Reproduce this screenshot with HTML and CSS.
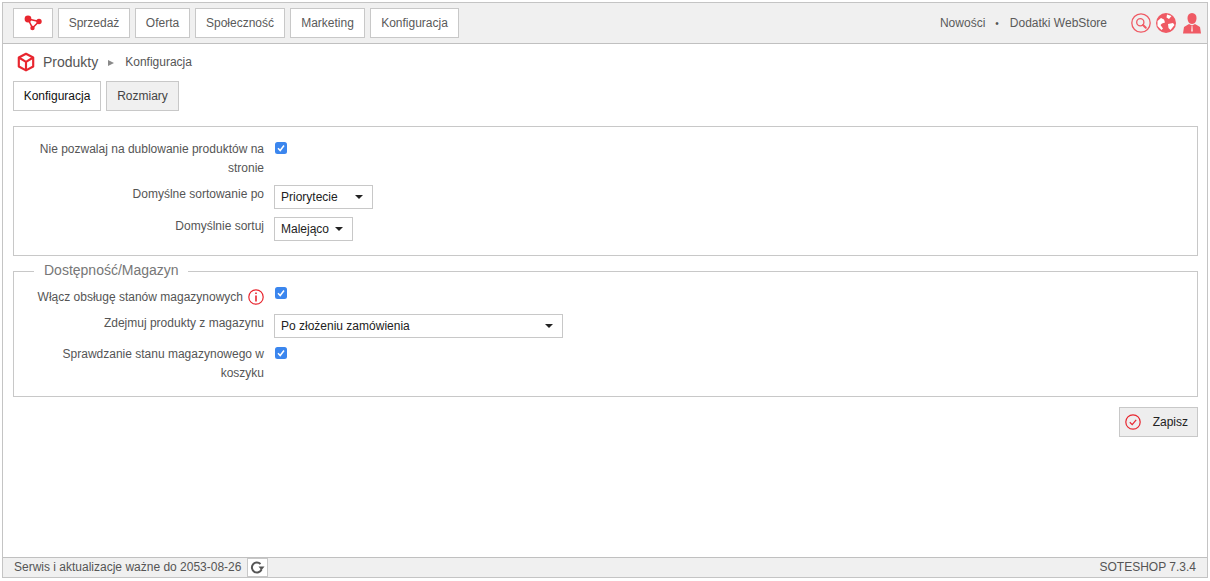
FILE: index.html
```html
<!DOCTYPE html>
<html lang="pl">
<head>
<meta charset="utf-8">
<title>Produkty - Konfiguracja</title>
<link rel="stylesheet" href="styles.css">
</head>
<body>
<div class="app">
  <header class="topbar">
    <nav class="menu">
      <a class="btn logo-btn"><svg width="18" height="16" viewBox="0 0 18 16"><g fill="#e8262f" stroke="#e8262f"><path d="M4 4 L15 6.5 L8.500 13 Z" fill="none" stroke-width="1.600"/><circle cx="4" cy="4" r="3.400" stroke="none"/><circle cx="15" cy="6.500" r="2.700" stroke="none"/><circle cx="8.500" cy="13" r="2.200" stroke="none"/></g></svg></a>
      <a class="btn w-sales">Sprzedaż</a>
      <a class="btn w-offer">Oferta</a>
      <a class="btn w-social">Społeczność</a>
      <a class="btn w-market">Marketing</a>
      <a class="btn w-config">Konfiguracja</a>
    </nav>
    <div class="tools">
      <a class="tool-link">Nowości</a>
      <span class="dot">•</span>
      <a class="tool-link">Dodatki WebStore</a>
      <div class="tool-icons">
        <svg width="20" height="20" viewBox="0 0 20 20"><circle cx="10" cy="10" r="9.200" fill="none" stroke="#ef5a64" stroke-width="1.300"/><circle cx="9.300" cy="9.300" r="3.600" fill="none" stroke="#ef5a64" stroke-width="1.300"/><path d="M12 12 L14.800 14.800" stroke="#ef5a64" stroke-width="2" stroke-linecap="round"/></svg>
        <svg width="20" height="20" viewBox="0 0 20 20"><circle cx="10" cy="10" r="10" fill="#ef5a64"/><path d="M1.500 8 L5 5 L8 6.500 L9 9.500 L6 10.500 L4.500 12 L7 15.500 L5.500 17 L1.500 13 Z M11 1.500 L15.500 3 L13 6 L10.500 4.500 Z M12 11 L17 10 L18.500 12 L14.500 17 L12.500 15 Z" fill="#fff"/></svg>
        <svg class="user-icon" width="18" height="21" viewBox="0 0 18 21"><path d="M9 0 C12 0 13.500 2.200 13.500 5 C13.500 8 12 11 9 11 C6 11 4.500 8 4.500 5 C4.500 2.200 6 0 9 0 Z" fill="#ef5a64"/><path d="M6 11 L9 12.500 L12 11 L17 14 L18 20.500 L0 20.500 L1 14 Z" fill="#ef5a64"/><path d="M8.600 13 L9.400 13 L9.700 18 L9 19 L8.300 18 Z" fill="#fff"/></svg>
      </div>
    </div>
  </header>

  <main class="content">
    <div class="crumbs">
      <svg class="cube" width="18" height="20" viewBox="0 0 20 22"><g fill="none" stroke="#e8262f" stroke-width="2.400" stroke-linejoin="round"><path d="M10 1.800 L18 6 L18 16 L10 20.300 L2 16 L2 6 Z"/><path d="M2.500 6.300 L10 10.800 L17.500 6.300 M10 10.800 L10 20"/></g></svg>
      <span class="crumb-main">Produkty</span>
      <span class="crumb-arrow"></span>
      <span class="crumb-sub">Konfiguracja</span>
    </div>
    <div class="tabs">
      <a class="tab tab-active">Konfiguracja</a>
      <a class="tab tab-sizes">Rozmiary</a>
    </div>

    <fieldset class="panel panel-first">
      <div class="row row-check row-dup">
        <label class="lbl">Nie pozwalaj na dublowanie produktów na stronie</label>
        <span class="check"><svg width="8" height="8" viewBox="0 0 8 8"><path d="M1 4.300 L3.200 6.500 L7 1.500" fill="none" stroke="#fff" stroke-width="1.500"/></svg></span>
      </div>
      <div class="row row-select">
        <label class="lbl">Domyślne sortowanie po</label>
        <div class="select sel-a"><span>Priorytecie</span><i class="caret"></i></div>
      </div>
      <div class="row row-select">
        <label class="lbl">Domyślnie sortuj</label>
        <div class="select sel-b"><span>Malejąco</span><i class="caret"></i></div>
      </div>
    </fieldset>

    <fieldset class="panel panel-second">
      <legend>Dostępność/Magazyn</legend>
      <div class="row row-stock">
        <label class="lbl lbl-info">Włącz obsługę stanów magazynowych <svg class="info" width="16" height="16" viewBox="0 0 16 16"><circle cx="8" cy="8" r="7.200" fill="none" stroke="#e8262f" stroke-width="1.200"/><path d="M8 3.400 L8 5" stroke="#e8262f" stroke-width="1.600"/><path d="M8 6.600 L8 12.400" stroke="#e8262f" stroke-width="1.600"/></svg></label>
        <span class="check"><svg width="8" height="8" viewBox="0 0 8 8"><path d="M1 4.300 L3.200 6.500 L7 1.500" fill="none" stroke="#fff" stroke-width="1.500"/></svg></span>
      </div>
      <div class="row row-select row-off">
        <label class="lbl">Zdejmuj produkty z magazynu</label>
        <div class="select sel-c"><span>Po złożeniu zamówienia</span><i class="caret"></i></div>
      </div>
      <div class="row row-check row-cart">
        <label class="lbl">Sprawdzanie stanu magazynowego w koszyku</label>
        <span class="check"><svg width="8" height="8" viewBox="0 0 8 8"><path d="M1 4.300 L3.200 6.500 L7 1.500" fill="none" stroke="#fff" stroke-width="1.500"/></svg></span>
      </div>
    </fieldset>

    <div class="actions">
      <button class="save" type="button"><svg width="16" height="16" viewBox="0 0 16 16"><circle cx="8" cy="8" r="7.200" fill="none" stroke="#e8262f" stroke-width="1.200"/><path d="M4.800 8.300 L7.200 10.600 L11.200 5.800" fill="none" stroke="#e8262f" stroke-width="1.200"/></svg><span>Zapisz</span></button>
    </div>
  </main>

  <footer class="statusbar">
    <div class="status-left">
      <span>Serwis i aktualizacje ważne do 2053-08-26</span>
      <a class="refresh"><svg width="15" height="13" viewBox="0 0 15 13"><path d="M11.500 8.500 A5 5 0 1 1 10.500 3" fill="none" stroke="#555" stroke-width="2"/><path d="M8.500 5.600 L14.500 5.600 L11.500 9.200 Z" fill="#555"/></svg></a>
    </div>
    <span class="version">SOTESHOP 7.3.4</span>
  </footer>
</div>
</body>
</html>
```
FILE: styles.css
```css
* { box-sizing: border-box; }
html, body { margin: 0; padding: 0; background: #fff; }
body {
  padding: 2px 2px 3px 2px;
  height: 581px;
  overflow: hidden;
  font-family: "Liberation Sans", Arial, sans-serif;
  font-size: 12px;
  color: #555;
}
.app {
  height: 576px;
  border: 1px solid #c4c4c4;
  display: flex;
  flex-direction: column;
}
.topbar {
  height: 41px;
  flex: none;
  background: #f0f0f0;
  border-bottom: 1px solid #c0c0c0;
  display: flex;
  justify-content: space-between;
  align-items: flex-start;
  padding: 5px 5px 0 10px;
}
.menu { display: flex; gap: 5px; }
.btn {
  height: 30px;
  background: #fff;
  border: 1px solid #c8c8c8;
  display: flex;
  align-items: center;
  justify-content: center;
  color: #5a5a5a;
}
.logo-btn { width: 40px; }
.w-sales { width: 72px; }
.w-offer { width: 55px; }
.w-social { width: 90px; }
.w-market { width: 75px; }
.w-config { width: 89px; }
.tools { display: flex; align-items: center; height: 30px; }
.tool-link { color: #5a5a5a; }
.dot { margin: 0 11px 0 10px; font-size: 10px; color: #555; }
.tool-icons { display: flex; align-items: center; gap: 5px; margin-left: 24px; margin-right: 1px; }
.user-icon { margin-left: 2px; }
.content { flex: 1; padding: 0 9px 0 10px; }
.crumbs { display: flex; align-items: center; height: 37px; padding: 0 0 1px 4px; }
.cube { margin-right: 8px; }
.crumb-main { font-size: 14px; color: #555; }
.crumb-arrow {
  width: 0; height: 0;
  margin: 1px 11px 0 10px;
  border-left: 6px solid #8a8a8a;
  border-top: 3.500px solid transparent;
  border-bottom: 3.500px solid transparent;
}
.crumb-sub { color: #555; }
.tabs { display: flex; gap: 5px; height: 30px; }
.tab {
  display: flex;
  align-items: center;
  justify-content: center;
  height: 30px;
  border: 1px solid #c8c8c8;
  background: #f0f0f0;
  color: #444;
}
.tab-active { width: 88px; background: #fff; color: #111; }
.tab-sizes { width: 73px; }
.panel {
  margin: 0;
  padding: 0;
  border: 1px solid #c8c8c8;
  min-width: 0;
}
.panel-first { margin-top: 15px; height: 130px; padding-top: 12px; }
.panel-second { margin-top: 7px; height: 134px; padding-top: 8px; }
.panel legend {
  margin-left: 20px;
  padding: 0 9px 1px 10px;
  font-size: 14px;
  line-height: 15px;
  color: #777;
}
.row { display: flex; align-items: flex-start; margin-bottom: 8px; }
.lbl {
  width: 250px;
  flex: none;
  padding-left: 10px;
  text-align: right;
  line-height: 19px;
  color: #555;
}
.row-dup .lbl { padding-top: 1px; }
.lbl-info {
  display: flex;
  justify-content: flex-end;
  align-items: center;
  gap: 5px;
  white-space: nowrap;
  height: 20px;
  padding-left: 0;
}
.info { flex: none; }
.row-dup { margin-bottom: 7px; }
.row-stock { height: 20px; margin-bottom: 7px; }
.check {
  width: 12px;
  height: 12px;
  margin-left: 11px;
  margin-top: 3px;
  border-radius: 2.500px;
  background: #3b86ee;
  display: flex;
  align-items: center;
  justify-content: center;
}
.row-stock .check { margin-top: 0; }
.row-cart .check { margin-top: 2px; }
.select {
  height: 24px;
  margin-left: 10px;
  background: #fff;
  border: 1px solid #c8c8c8;
  display: flex;
  align-items: center;
  justify-content: space-between;
  padding: 0 9px 0 6px;
  color: #222;
}
.caret {
  width: 0; height: 0;
  border-top: 4px solid #222;
  border-left: 4px solid transparent;
  border-right: 4px solid transparent;
}
.sel-a { width: 99px; }
.sel-b { width: 79px; }
.sel-c { width: 289px; }
.row-off { margin-bottom: 7px; }
.actions { display: flex; justify-content: flex-end; margin-top: 10px; }
.save {
  width: 79px;
  height: 30px;
  background: #eee;
  border: 1px solid #c8c8c8;
  display: flex;
  align-items: center;
  justify-content: space-between;
  padding: 0 9px 0 5px;
  font: inherit;
  color: #222;
}
.statusbar {
  height: 20px;
  flex: none;
  background: #f0f0f0;
  border-top: 1px solid #c0c0c0;
  display: flex;
  justify-content: space-between;
  align-items: center;
  padding: 0 11px 2px 11px;
  color: #555;
}
.status-left { display: flex; align-items: center; gap: 6px; }
.refresh {
  width: 21px;
  height: 19px;
  margin-bottom: -2px;
  background: #fff;
  border: 1px solid #c8c8c8;
  display: flex;
  align-items: center;
  justify-content: center;
}
```
